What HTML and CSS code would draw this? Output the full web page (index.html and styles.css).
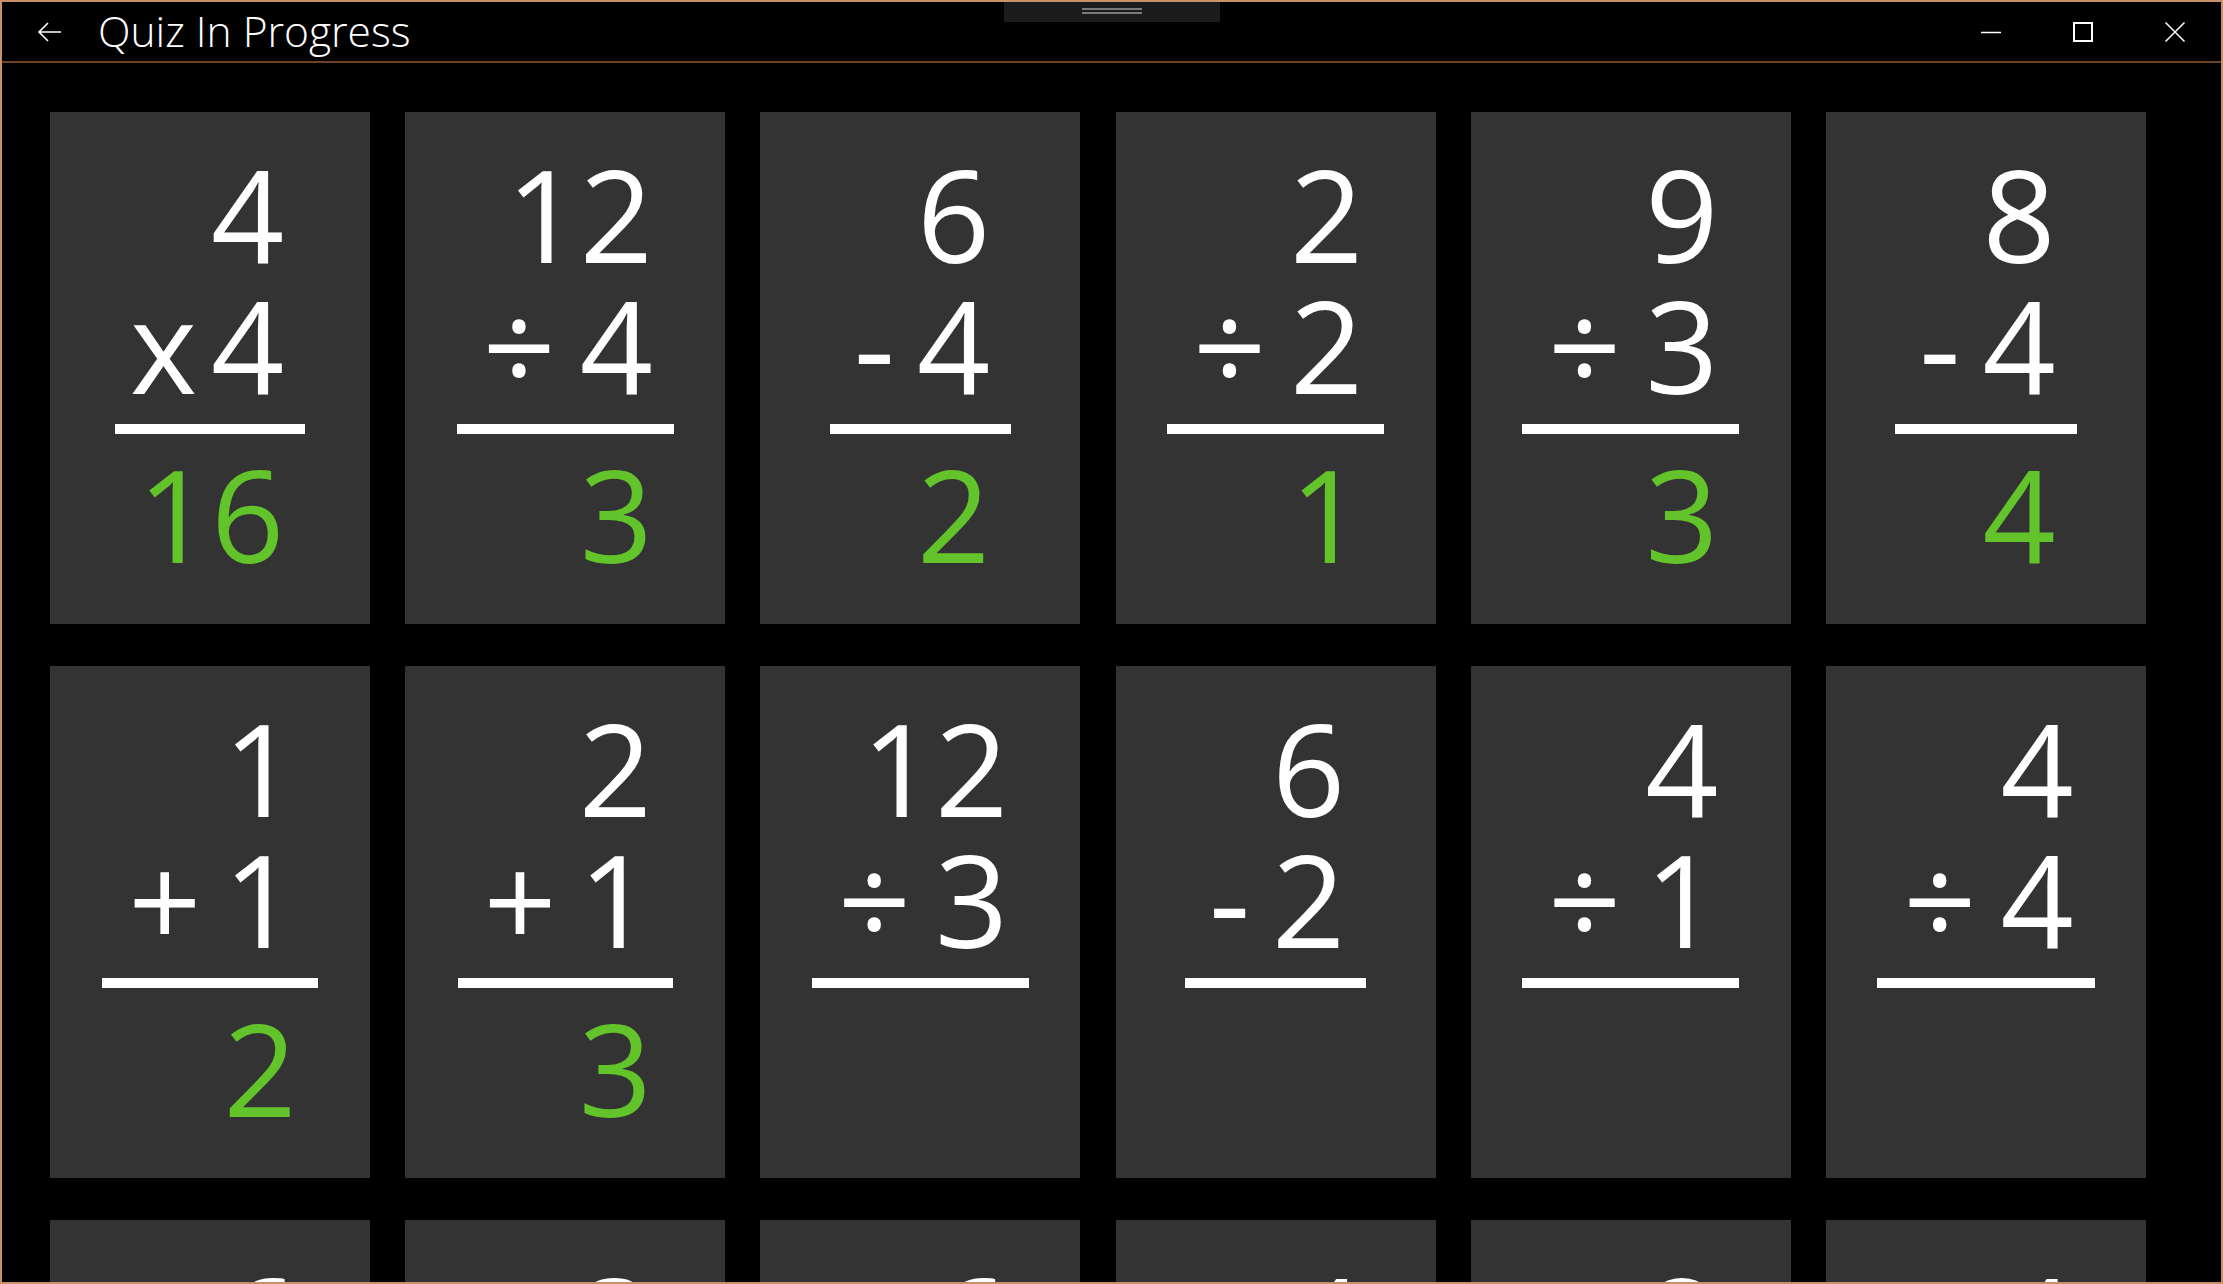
FILE: index.html
```html
<!DOCTYPE html>
<html lang="en">

<head>
  <meta charset="UTF-8" />
  <meta name="viewport" content="width=device-width, initial-scale=1.0" />
  <title>Quiz In Progress</title>
  <link rel="stylesheet" href="styles.css">
</head>

<body>
  <div class="window">
    <div class="grip"><span></span><span></span></div>

    <header class="titlebar">
      <button class="back" aria-label="Back">
        <svg width="26" height="22" viewBox="0 0 26 22" fill="none" stroke="#fff" stroke-width="1.6">
          <path d="M2 11 H24 M11 2 L2 11 L11 20" />
        </svg>
      </button>
      <h1 class="title">Quiz In Progress</h1>
      <div class="controls">
        <button class="ctl" aria-label="Minimize">
          <svg width="20" height="20" viewBox="0 0 20 20" stroke="#fff" stroke-width="1.5">
            <path d="M0 10.5 H20" />
          </svg>
        </button>
        <button class="ctl" aria-label="Maximize">
          <svg width="20" height="20" viewBox="0 0 20 20" fill="none" stroke="#fff" stroke-width="2">
            <rect x="1" y="1" width="18" height="18" />
          </svg>
        </button>
        <button class="ctl" aria-label="Close">
          <svg width="20" height="20" viewBox="0 0 20 20" stroke="#fff" stroke-width="1.5">
            <path d="M0.5 0.5 L19.5 19.5 M19.5 0.5 L0.5 19.5" />
          </svg>
        </button>
      </div>
    </header>

    <main class="quiz">
      <div class="card"><div class="sum">
        <div class="row">4</div>
        <div class="row"><span class="op times">x</span>4</div>
        <div class="rule"></div>
        <div class="row answer">16</div>
      </div></div>
      <div class="card"><div class="sum">
        <div class="row">12</div>
        <div class="row"><span class="op div">÷</span>4</div>
        <div class="rule"></div>
        <div class="row answer">3</div>
      </div></div>
      <div class="card"><div class="sum">
        <div class="row">6</div>
        <div class="row"><span class="op minus">-</span>4</div>
        <div class="rule"></div>
        <div class="row answer">2</div>
      </div></div>
      <div class="card"><div class="sum">
        <div class="row">2</div>
        <div class="row"><span class="op div">÷</span>2</div>
        <div class="rule"></div>
        <div class="row answer">1</div>
      </div></div>
      <div class="card"><div class="sum">
        <div class="row">9</div>
        <div class="row"><span class="op div">÷</span>3</div>
        <div class="rule"></div>
        <div class="row answer">3</div>
      </div></div>
      <div class="card"><div class="sum">
        <div class="row">8</div>
        <div class="row"><span class="op minus">-</span>4</div>
        <div class="rule"></div>
        <div class="row answer">4</div>
      </div></div>

      <div class="card"><div class="sum">
        <div class="row">1</div>
        <div class="row"><span class="op plus">+</span>1</div>
        <div class="rule"></div>
        <div class="row answer">2</div>
      </div></div>
      <div class="card"><div class="sum">
        <div class="row">2</div>
        <div class="row"><span class="op plus">+</span>1</div>
        <div class="rule"></div>
        <div class="row answer">3</div>
      </div></div>
      <div class="card"><div class="sum">
        <div class="row">12</div>
        <div class="row"><span class="op div">÷</span>3</div>
        <div class="rule"></div>
        <div class="row answer"></div>
      </div></div>
      <div class="card"><div class="sum">
        <div class="row">6</div>
        <div class="row"><span class="op minus">-</span>2</div>
        <div class="rule"></div>
        <div class="row answer"></div>
      </div></div>
      <div class="card"><div class="sum">
        <div class="row">4</div>
        <div class="row"><span class="op div">÷</span>1</div>
        <div class="rule"></div>
        <div class="row answer"></div>
      </div></div>
      <div class="card"><div class="sum">
        <div class="row">4</div>
        <div class="row"><span class="op div">÷</span>4</div>
        <div class="rule"></div>
        <div class="row answer"></div>
      </div></div>

      <div class="card"><div class="sum">
        <div class="row">6</div>
        <div class="row"><span class="op div">÷</span>2</div>
        <div class="rule"></div>
        <div class="row answer"></div>
      </div></div>
      <div class="card"><div class="sum">
        <div class="row">3</div>
        <div class="row"><span class="op div">÷</span>1</div>
        <div class="rule"></div>
        <div class="row answer"></div>
      </div></div>
      <div class="card"><div class="sum">
        <div class="row">6</div>
        <div class="row"><span class="op div">÷</span>3</div>
        <div class="rule"></div>
        <div class="row answer"></div>
      </div></div>
      <div class="card"><div class="sum">
        <div class="row">4</div>
        <div class="row"><span class="op div">÷</span>2</div>
        <div class="rule"></div>
        <div class="row answer"></div>
      </div></div>
      <div class="card"><div class="sum">
        <div class="row">8</div>
        <div class="row"><span class="op div">÷</span>2</div>
        <div class="rule"></div>
        <div class="row answer"></div>
      </div></div>
      <div class="card"><div class="sum">
        <div class="row">4</div>
        <div class="row"><span class="op div">÷</span>4</div>
        <div class="rule"></div>
        <div class="row answer"></div>
      </div></div>
    </main>
  </div>
</body>

</html>
```

FILE: styles.css
```css
html,
body {
  margin: 0;
  background: #000;
}

body {
  color: #fff;
  font-family: "Open Sans", "Noto Sans", sans-serif;
}

.window {
  position: relative;
  height: 1284px;
  box-sizing: border-box;
  border: 2px solid #c8916b;
  overflow: hidden;
}

/* drag handle on top of the title bar */
.grip {
  position: absolute;
  top: 0;
  left: 50%;
  transform: translateX(-50%);
  width: 216px;
  height: 20px;
  box-sizing: border-box;
  padding-top: 6px;
  background: #1c1c1c;
  display: flex;
  flex-direction: column;
  align-items: center;
  gap: 2px;
}

.grip span {
  width: 60px;
  height: 2px;
  background: #7a7a7a;
}

.titlebar {
  display: flex;
  align-items: center;
  height: 59px;
  border-bottom: 2px solid #6b4224;
}

.titlebar button {
  background: none;
  border: none;
  padding: 0;
  margin: 0;
  height: 59px;
  display: flex;
  align-items: center;
  justify-content: center;
  cursor: pointer;
}

.back {
  width: 96px;
}

.title {
  margin: 0;
  flex: 1;
  font-size: 42.5px;
  font-weight: 300;
  line-height: 59px;
  padding-bottom: 3px;
}

.controls {
  display: flex;
}

.ctl {
  width: 92px;
}

.quiz {
  display: grid;
  grid-template-columns: repeat(6, 320px);
  grid-auto-rows: 512px;
  column-gap: 35.2px;
  row-gap: 42px;
  padding: 49px 0 0 48px;
}

.card {
  background: #333333;
  display: flex;
  justify-content: center;
  align-items: flex-start;
  padding-top: 36px;
  box-sizing: border-box;
}

.sum {
  display: flex;
  flex-direction: column;
  font-size: 128px;
  line-height: 131px;
}

.row {
  text-align: right;
  white-space: nowrap;
  padding-right: 21px;
  min-height: 131px;
}

.op {
  display: inline-block;
}

.op.times {
  margin: 0 14px 0 15px;
}

.op.div {
  margin: 0 24px 0 26px;
}

.op.minus {
  margin: 0 22px 0 24px;
}

.op.plus {
  margin: 0 22px 0 26px;
}

.rule {
  height: 10px;
  background: #fff;
  margin: 14px 0;
}

.answer {
  color: #62c32b;
}
```
